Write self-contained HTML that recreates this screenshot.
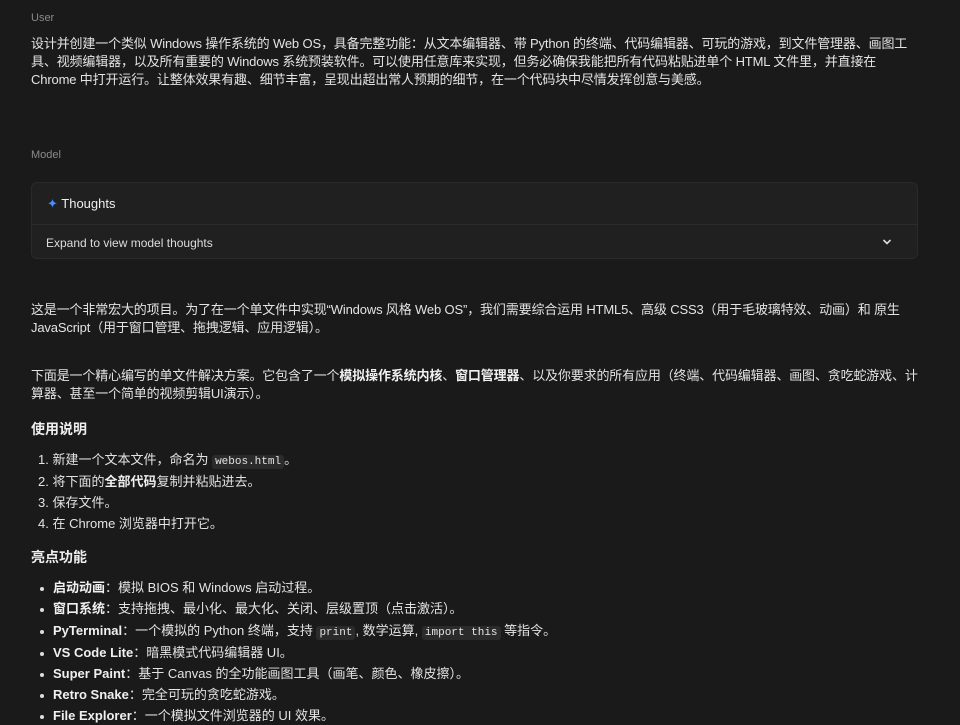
<!DOCTYPE html>
<html><head><meta charset="utf-8"><style>
body{margin:0;width:960px;height:712px;overflow:hidden;background:#1a1a1a;color:#e3e3e3;font-family:"Liberation Sans","Noto Sans CJK SC",sans-serif;font-size:13px}
.a{position:absolute;white-space:nowrap;line-height:18px}
.t{letter-spacing:-0.15px}
.lbl{color:#8a8a8a;font-size:11px}
code{font-family:"Liberation Mono","Noto Sans CJK SC",monospace;font-size:11px;background:#2b2b2b;border-radius:3px;padding:1px 3px}
b{font-weight:bold;color:#f0f0f0}
h{font-weight:bold;font-size:14px;color:#eee}
.card{position:absolute;left:31px;top:182px;width:887px;height:77px;background:#202020;border:1px solid #2a2a2a;border-radius:6px;box-sizing:border-box}
.dot{position:absolute;left:40px;width:4px;height:4px;border-radius:2px;background:#ddd}
</style></head><body>
<div class="a lbl" style="left:31px;top:9px">User</div>
<div class="a t" style="left:31px;top:35px">设计并创建一个类似 Windows 操作系统的 Web OS，具备完整功能：从文本编辑器、带 Python 的终端、代码编辑器、可玩的游戏，到文件管理器、画图工</div>
<div class="a t" style="left:31px;top:53px">具、视频编辑器，以及所有重要的 Windows 系统预装软件。可以使用任意库来实现，但务必确保我能把所有代码粘贴进单个 HTML 文件里，并直接在</div>
<div class="a t" style="left:31px;top:71px">Chrome 中打开运行。让整体效果有趣、细节丰富，呈现出超出常人预期的细节，在一个代码块中尽情发挥创意与美感。</div>
<div class="a lbl" style="left:31px;top:146px">Model</div>
<div class="card">
<div style="position:absolute;left:0;right:0;top:41px;height:1px;background:#2c2c2c"></div>
<div class="a" style="left:15px;top:12px;font-size:13px;color:#eee"><span style="color:#4a8cff">✦</span> Thoughts</div>
<div class="a" style="left:14px;top:51px;font-size:12px;color:#ddd">Expand to view model thoughts</div>
<svg style="position:absolute;left:850px;top:55px" width="10" height="8" viewBox="0 0 10 8"><path d="M1.5 2 L5 5.5 L8.5 2" stroke="#ddd" stroke-width="1.6" fill="none"/></svg>
</div>
<div class="a t" style="left:31px;top:301px">这是一个非常宏大的项目。为了在一个单文件中实现“Windows 风格 Web OS”，我们需要综合运用 HTML5、高级 CSS3（用于毛玻璃特效、动画）和 原生</div>
<div class="a t" style="left:31px;top:319px">JavaScript（用于窗口管理、拖拽逻辑、应用逻辑）。</div>
<div class="a t" style="left:31px;top:367px">下面是一个精心编写的单文件解决方案。它包含了一个<b>模拟操作系统内核</b>、<b>窗口管理器</b>、以及你要求的所有应用（终端、代码编辑器、画图、贪吃蛇游戏、计</div>
<div class="a t" style="left:31px;top:385px">算器、甚至一个简单的视频剪辑UI演示）。</div>
<div class="a" style="left:31px;top:420px"><h>使用说明</h></div>
<div class="a" style="left:38px;top:451px">1. 新建一个文本文件，命名为 <code>webos.html</code>。</div>
<div class="a" style="left:38px;top:473px">2. 将下面的<b>全部代码</b>复制并粘贴进去。</div>
<div class="a" style="left:38px;top:494px">3. 保存文件。</div>
<div class="a" style="left:38px;top:515px">4. 在 Chrome 浏览器中打开它。</div>
<div class="a" style="left:31px;top:548px"><h>亮点功能</h></div>
<div class="dot" style="top:587px"></div><div class="a" style="left:53px;top:579px"><b>启动动画</b>：模拟 BIOS 和 Windows 启动过程。</div>
<div class="dot" style="top:608px"></div><div class="a" style="left:53px;top:600px"><b>窗口系统</b>：支持拖拽、最小化、最大化、关闭、层级置顶（点击激活）。</div>
<div class="dot" style="top:630px"></div><div class="a" style="left:53px;top:622px"><b>PyTerminal</b>：一个模拟的 Python 终端，支持 <code>print</code>, 数学运算, <code>import this</code> 等指令。</div>
<div class="dot" style="top:652px"></div><div class="a" style="left:53px;top:644px"><b>VS Code Lite</b>：暗黑模式代码编辑器 UI。</div>
<div class="dot" style="top:673px"></div><div class="a" style="left:53px;top:665px"><b>Super Paint</b>：基于 Canvas 的全功能画图工具（画笔、颜色、橡皮擦）。</div>
<div class="dot" style="top:694px"></div><div class="a" style="left:53px;top:686px"><b>Retro Snake</b>：完全可玩的贪吃蛇游戏。</div>
<div class="dot" style="top:715px"></div><div class="a" style="left:53px;top:707px"><b>File Explorer</b>：一个模拟文件浏览器的 UI 效果。</div>
</body></html>
